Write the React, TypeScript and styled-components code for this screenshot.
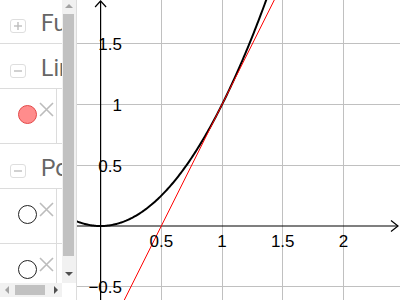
import React from "react";
import styled, { createGlobalStyle } from "styled-components";

const GlobalStyle = createGlobalStyle`
  html, body {
    margin: 0;
    padding: 0;
    background: #fff;
  }
  body {
    font-family: "Liberation Sans", Arial, sans-serif;
  }
`;

const Frame = styled.div`
  display: flex;
  width: 400px;
  height: 300px;
  overflow: hidden;
  background: #fff;
`;

const AlgebraPane = styled.div`
  display: grid;
  grid-template-columns: 62px 14px;
  grid-template-rows: 283px 14px 3px;
  width: 76px;
  border-right: 1px solid #dcdcdc;
  flex-shrink: 0;
`;

const ListViewport = styled.div`
  overflow: hidden;
  position: relative;
`;

const List = styled.div`
  width: 260px;
  margin-top: -1px;
`;

const GroupHeader = styled.div`
  display: flex;
  align-items: flex-start;
  height: 44px;
  border-bottom: 1px solid #dcdcdc;
  box-sizing: content-box;
`;

const Toggle = styled.div`
  width: 14px;
  height: 12px;
  margin: 20px 0 0 10px;
  border: 1px solid #dedede;
  border-radius: 3px;
  display: flex;
  align-items: center;
  justify-content: center;
  flex-shrink: 0;
`;

const GroupTitle = styled.span`
  margin: 13px 0 0 15px;
  font-family: Roboto, "Liberation Sans", sans-serif;
  font-size: 23px;
  line-height: 24px;
  color: #666;
  white-space: nowrap;
`;

const ItemRow = styled.div`
  display: flex;
  height: 54px;
  border-bottom: 1px solid #dcdcdc;
`;

const MarbleCell = styled.div`
  width: 56px;
  border-right: 1px solid #dcdcdc;
  position: relative;
  flex-shrink: 0;
`;

const Marble = styled.div<{ $on?: boolean }>`
  position: absolute;
  left: 18px;
  top: 16px;
  width: 17px;
  height: 17px;
  border-radius: 50%;
  border: 1px solid ${(p) => (p.$on ? "#e34848" : "#222")};
  background: ${(p) => (p.$on ? "#ff8c8c" : "#fff")};
`;

const DeleteIcon = styled.svg`
  position: absolute;
  left: 38px;
  top: 12px;
`;

const VScroll = styled.div`
  background: #f1f1f1;
  display: flex;
  flex-direction: column;
  align-items: center;
`;

const VThumb = styled.div`
  width: 11px;
  margin-left: -1px;
  height: 242px;
  background: #c1c1c1;
`;

const ArrowBox = styled.div`
  height: 12px;
  width: 14px;
  display: flex;
  align-items: center;
  justify-content: center;
  flex-shrink: 0;
`;

const Tri = styled.div<{ $dir: "up" | "down" | "left" | "right" }>`
  width: 0;
  height: 0;
  ${(p) =>
    p.$dir === "up"
      ? "border-left: 4px solid transparent; border-right: 4px solid transparent; border-bottom: 4px solid #a3a3a3;"
      : p.$dir === "down"
      ? "border-left: 4px solid transparent; border-right: 4px solid transparent; border-top: 4px solid #505050;"
      : p.$dir === "left"
      ? "border-top: 4px solid transparent; border-bottom: 4px solid transparent; border-right: 4px solid #a3a3a3;"
      : "border-top: 4px solid transparent; border-bottom: 4px solid transparent; border-left: 4px solid #505050;"}
`;

const HScroll = styled.div`
  background: #f1f1f1;
  display: flex;
  align-items: center;
`;

const HArrow = styled.div`
  width: 13px;
  height: 14px;
  display: flex;
  align-items: center;
  justify-content: center;
  flex-shrink: 0;
`;

const HThumb = styled.div`
  width: 30px;
  height: 10px;
  margin-left: 2px;
  background: #c1c1c1;
`;

const Spacer = styled.div`
  flex: 1;
`;

const Corner = styled.div`
  background: #fff;
`;

const Graphics = styled.div`
  flex: 1;
  position: relative;
  overflow: hidden;
`;

const LabelText = styled.text`
  font-family: "Liberation Sans", Arial, sans-serif;
  font-size: 17px;
  fill: #000;
`;

// page coordinates
const OX = 100.6;
const OY = 226;
const S = 121.4;
const LEFT = 77;

const px = (x: number) => OX + x * S;
const py = (y: number) => OY - y * S;

function Toggler({ open }: { open: boolean }) {
  return (
    <Toggle>
      <svg width="10" height="10" viewBox="0 0 10 10">
        <line x1="1" y1="5" x2="9" y2="5" stroke="#bdbdbd" strokeWidth="1.4" />
        {!open && <line x1="5" y1="1" x2="5" y2="9" stroke="#bdbdbd" strokeWidth="1.4" />}
      </svg>
    </Toggle>
  );
}

function Item({ on }: { on?: boolean }) {
  return (
    <ItemRow>
      <MarbleCell>
        <Marble $on={on} />
        <DeleteIcon width="17" height="17" viewBox="0 0 17 17">
          <path d="M2 2 L15 15 M15 2 L2 15" stroke="#bcbcbc" strokeWidth="1.6" fill="none" />
        </DeleteIcon>
      </MarbleCell>
    </ItemRow>
  );
}

function Plot() {
  const curve: string[] = [];
  for (let x = -0.2; x <= 1.45; x += 0.01) {
    curve.push(`${px(x).toFixed(2)},${py(x * x).toFixed(2)}`);
  }
  const gridX = [-0.5, 0.5, 1, 1.5, 2, 2.5];
  const gridY = [1.5, 1, 0.5, -0.5];
  const xLabels = ["0.5", "1", "1.5", "2"];
  const yLabels: [number, string][] = [
    [1.5, "1.5"],
    [1, "1"],
    [0.5, "0.5"],
    [-0.5, "\u22120.5"],
  ];
  return (
    <svg width={400 - LEFT} height="300" viewBox={`${LEFT} 0 ${400 - LEFT} 300`}>
      <g stroke="#c0c0c0" strokeWidth="1" shapeRendering="crispEdges">
        {gridX.map((g) => (
          <line key={"x" + g} x1={px(g)} y1="0" x2={px(g)} y2="300" />
        ))}
        {gridY.map((g) => (
          <line key={"y" + g} x1={LEFT} y1={py(g)} x2="400" y2={py(g)} />
        ))}
      </g>
      <g stroke="#000" strokeWidth="1.2" fill="none">
        <line x1={OX} y1="1" x2={OX} y2="300" />
        <line x1={LEFT} y1={OY} x2="398" y2={OY} />
        <path d={`M${OX - 5.5} 7 L${OX} 1 L${OX + 5.5} 7`} />
        <path d={`M391 ${OY - 5.5} L398 ${OY} L391 ${OY + 5.5}`} />
      </g>
      <polyline points={curve.join(" ")} fill="none" stroke="#000" strokeWidth="2" />
      <line x1={px(-0.2)} y1={py(-1.4)} x2={px(1.6)} y2={py(2.2)} stroke="#ff0000" strokeWidth="1" />
      {xLabels.map((l) => (
        <LabelText key={l} x={px(parseFloat(l))} y={247} textAnchor="middle">
          {l}
        </LabelText>
      ))}
      {yLabels.map(([v, l]) => (
        <LabelText key={l} x={122} y={py(v) + 6.5} textAnchor="end">
          {l}
        </LabelText>
      ))}
    </svg>
  );
}

export default function App() {
  return (
    <Frame>
      <GlobalStyle />
      <AlgebraPane>
        <ListViewport>
          <List>
            <GroupHeader>
              <Toggler open={false} />
              <GroupTitle>Function</GroupTitle>
            </GroupHeader>
            <GroupHeader>
              <Toggler open />
              <GroupTitle>Line</GroupTitle>
            </GroupHeader>
            <Item on />
            <GroupHeader>
              <Toggler open />
              <GroupTitle>Point</GroupTitle>
            </GroupHeader>
            <Item />
            <Item />
          </List>
        </ListViewport>
        <VScroll>
          <ArrowBox>
            <Tri $dir="up" />
          </ArrowBox>
          <Spacer style={{ flex: "0 0 2px" }} />
          <VThumb />
          <Spacer />
          <ArrowBox>
            <Tri $dir="down" />
          </ArrowBox>
          <Spacer style={{ flex: "0 0 3px" }} />
        </VScroll>
        <HScroll>
          <HArrow>
            <Tri $dir="left" />
          </HArrow>
          <HThumb />
          <Spacer />
          <HArrow>
            <Tri $dir="right" />
          </HArrow>
        </HScroll>
        <Corner />
      </AlgebraPane>
      <Graphics>
        <Plot />
      </Graphics>
    </Frame>
  );
}
